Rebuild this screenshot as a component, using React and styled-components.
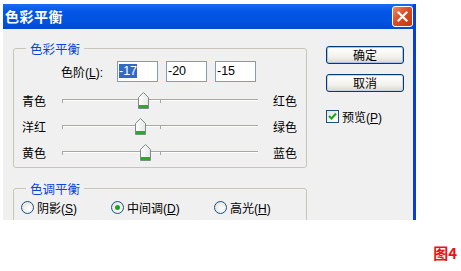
import React from "react";
import styled, { createGlobalStyle } from "styled-components";

const GlobalStyle = createGlobalStyle`
  html, body {
    margin: 0;
    padding: 0;
    background: #fff;
  }
  body {
    font-family: "Liberation Sans", "Noto Sans CJK SC", sans-serif;
    font-size: 12px;
    color: #000;
  }
`;

const Page = styled.div`
  width: 461px;
  height: 271px;
  padding: 4px 0 0 3px;
  box-sizing: border-box;
`;

const Dialog = styled.div`
  width: 413px;
  height: 216px;
  box-sizing: border-box;
  border-right: 3px solid #0a3fd6;
  background: #f0f0f0;
  overflow: hidden;
`;

const TitleBar = styled.div`
  height: 25px;
  display: flex;
  align-items: center;
  justify-content: space-between;
  padding: 0 0 0 2px;
  background: linear-gradient(#1a6cf2, #0457e6 30%, #0052e0 70%, #024ad2);

  h1 {
    margin: 0;
    color: #fff;
    font-family: "Noto Sans CJK SC", sans-serif;
    font-size: 14px;
    font-weight: bold;
    line-height: 25px;
    letter-spacing: 0.5px;
  }
`;

const CloseButton = styled.div`
  width: 19px;
  height: 19px;
  border: 1px solid #fff;
  border-radius: 3px;
  background: linear-gradient(135deg, #ee8a65, #db4d24 45%, #c03812);
  display: flex;
  align-items: center;
  justify-content: center;
`;

const Body = styled.div`
  display: flex;
  gap: 19px;
  padding: 17px 0 0 10px;
`;

const LeftCol = styled.div`
  width: 294px;
  margin-top: 2px;
  display: flex;
  flex-direction: column;
  gap: 20px;
`;

const Group = styled.div`
  height: ${(p) => p.$h}px;
  box-sizing: border-box;
  border: 1px solid #c8c6b8;
  border-radius: 3px;
  display: flex;
  flex-direction: column;
`;

const Legend = styled.div`
  align-self: flex-start;
  margin: -8px 0 0 12px;
  padding: 0 4px;
  height: 15px;
  line-height: 15px;
  background: #f0f0f0;
  color: #0a46d8;
  font-family: "Noto Sans CJK SC", sans-serif;
  font-size: 12.5px;
`;

const LevelRow = styled.div`
  display: flex;
  align-items: center;
  margin: 5px 0 0 47px;
  height: 21px;
`;

const LevelLabel = styled.span`
  width: 56px;
`;

const LevelInput = styled.div`
  width: 41px;
  height: 21px;
  box-sizing: border-box;
  margin-right: 8px;
  border: 1px solid #7f9db9;
  background: #fff;
  padding-left: 1px;
  line-height: 19px;
  font-size: 12.5px;

  span {
    background: ${(p) => (p.$selected ? "#316ac5" : "transparent")};
    color: ${(p) => (p.$selected ? "#fff" : "#000")};
  }
`;

const SliderList = styled.div`
  margin-top: 5px;
  display: flex;
  flex-direction: column;
`;

const SliderRow = styled.div`
  height: 26px;
  display: flex;
  align-items: center;
  padding-left: 8px;
`;

const SideLabel = styled.span`
  width: ${(p) => p.$w}px;
  font-family: "Noto Sans CJK SC", sans-serif;
  font-size: 12px;
`;

const Track = styled.div`
  position: relative;
  width: 196px;
  height: 1px;
  margin: -1px 15px 0 0;
  background: #a8a8a0;
  border-bottom: 1px solid #fff;

  &::before,
  &::after {
    content: "";
    position: absolute;
    top: 0;
    width: 1px;
    height: 4px;
    background: #a8a8a0;
  }
  &::before {
    left: 0;
  }
  &::after {
    left: 98px;
  }
`;

const Thumb = styled.svg`
  position: absolute;
  top: -7px;
  margin-left: -5px;
  z-index: 1;
`;

const RadioRow = styled.div`
  display: flex;
  align-items: center;
  height: 16px;
  margin: 3px 0 0 7px;
`;

const RadioItem = styled.label`
  width: ${(p) => p.$w}px;
  display: flex;
  align-items: center;
  gap: 3px;
`;

const RadioDot = styled.span`
  width: 13px;
  height: 13px;
  box-sizing: border-box;
  border-radius: 50%;
  border: 1px solid #1c5180;
  background: radial-gradient(circle at 60% 60%, #fff, #dcdcd6);
  display: flex;
  align-items: center;
  justify-content: center;

  &::after {
    content: "";
    width: 5px;
    height: 5px;
    border-radius: 50%;
    background: ${(p) => (p.$checked ? "#21a121" : "transparent")};
  }
`;

const RightCol = styled.div`
  width: 78px;
  display: flex;
  flex-direction: column;
`;

const Button = styled.div`
  height: 18px;
  box-sizing: border-box;
  margin-bottom: 10px;
  border: 1px solid #003c74;
  border-radius: 3px;
  background: linear-gradient(#fff, #f3f2ec 60%, #dcd8cc);
  box-shadow: inset 0 0 0 1px ${(p) => (p.$primary ? "#a8c3f0" : "#c6d3ea")};
  display: flex;
  align-items: center;
  justify-content: center;
  font-family: "Noto Sans CJK SC", sans-serif;
  font-size: 12px;
  line-height: 16px;
`;

const CheckRow = styled.label`
  margin-top: 6px;
  display: flex;
  align-items: center;
  gap: 3px;
`;

const CheckBox = styled.span`
  width: 13px;
  height: 13px;
  box-sizing: border-box;
  border: 1px solid #1c5180;
  background: linear-gradient(135deg, #e6e6de, #fff);
  display: flex;
  align-items: center;
  justify-content: center;
`;

const Footer = styled.div`
  display: flex;
  justify-content: flex-end;
  padding-right: 4px;
  margin-top: 22px;
  color: #f01010;
  font-family: "Noto Sans CJK SC", sans-serif;
  font-size: 15px;
  font-weight: bold;
`;

const sliders = [
  { left: "青色", right: "红色", value: -17 },
  { left: "洋红", right: "绿色", value: -20 },
  { left: "黄色", right: "蓝色", value: -15 },
];

function SliderThumb({ value }) {
  return (
    <Thumb
      width="11"
      height="17"
      viewBox="0 0 11 17"
      style={{ left: `${98 + value * 0.98}px` }}
    >
      <defs>
        <linearGradient id="tg" x1="0" y1="0" x2="1" y2="0">
          <stop offset="0" stopColor="#ffffff" />
          <stop offset="1" stopColor="#e4e8e4" />
        </linearGradient>
      </defs>
      <path d="M5.5 0.5 L10.5 5.5 L10.5 16.5 L0.5 16.5 L0.5 5.5 Z" fill="url(#tg)" stroke="#7e8c86" />
      <rect x="1" y="13" width="9" height="3" fill="#21b021" />
    </Thumb>
  );
}

export default function App() {
  return (
    <Page>
      <GlobalStyle />
      <Dialog>
        <TitleBar>
          <h1>色彩平衡</h1>
          <CloseButton>
            <svg width="13" height="13" viewBox="0 0 13 13">
              <path d="M2.5 2.5 L10.5 10.5 M10.5 2.5 L2.5 10.5" stroke="#fff" strokeWidth="2.2" strokeLinecap="square" />
            </svg>
          </CloseButton>
        </TitleBar>
        <Body>
          <LeftCol>
            <Group $h={120}>
              <Legend>色彩平衡</Legend>
              <LevelRow>
                <LevelLabel>
                  色阶(<u>L</u>):
                </LevelLabel>
                <LevelInput $selected>
                  <span>-17</span>
                </LevelInput>
                <LevelInput>
                  <span>-20</span>
                </LevelInput>
                <LevelInput>
                  <span>-15</span>
                </LevelInput>
              </LevelRow>
              <SliderList>
                {sliders.map((s) => (
                  <SliderRow key={s.left}>
                    <SideLabel $w={40}>{s.left}</SideLabel>
                    <Track>
                      <SliderThumb value={s.value} />
                    </Track>
                    <SideLabel $w={30}>{s.right}</SideLabel>
                  </SliderRow>
                ))}
              </SliderList>
            </Group>
            <Group $h={60}>
              <Legend>色调平衡</Legend>
              <RadioRow>
                <RadioItem $w={90}>
                  <RadioDot />
                  <span>
                    阴影(<u>S</u>)
                  </span>
                </RadioItem>
                <RadioItem $w={103}>
                  <RadioDot $checked />
                  <span>
                    中间调(<u>D</u>)
                  </span>
                </RadioItem>
                <RadioItem $w={80}>
                  <RadioDot />
                  <span>
                    高光(<u>H</u>)
                  </span>
                </RadioItem>
              </RadioRow>
            </Group>
          </LeftCol>
          <RightCol>
            <Button $primary>确定</Button>
            <Button>取消</Button>
            <CheckRow>
              <CheckBox>
                <svg width="9" height="9" viewBox="0 0 9 9">
                  <path d="M1 4 L3.5 6.5 L8 1.5" fill="none" stroke="#21a121" strokeWidth="2" />
                </svg>
              </CheckBox>
              <span>
                预览(<u>P</u>)
              </span>
            </CheckRow>
          </RightCol>
        </Body>
      </Dialog>
      <Footer>图4</Footer>
    </Page>
  );
}
